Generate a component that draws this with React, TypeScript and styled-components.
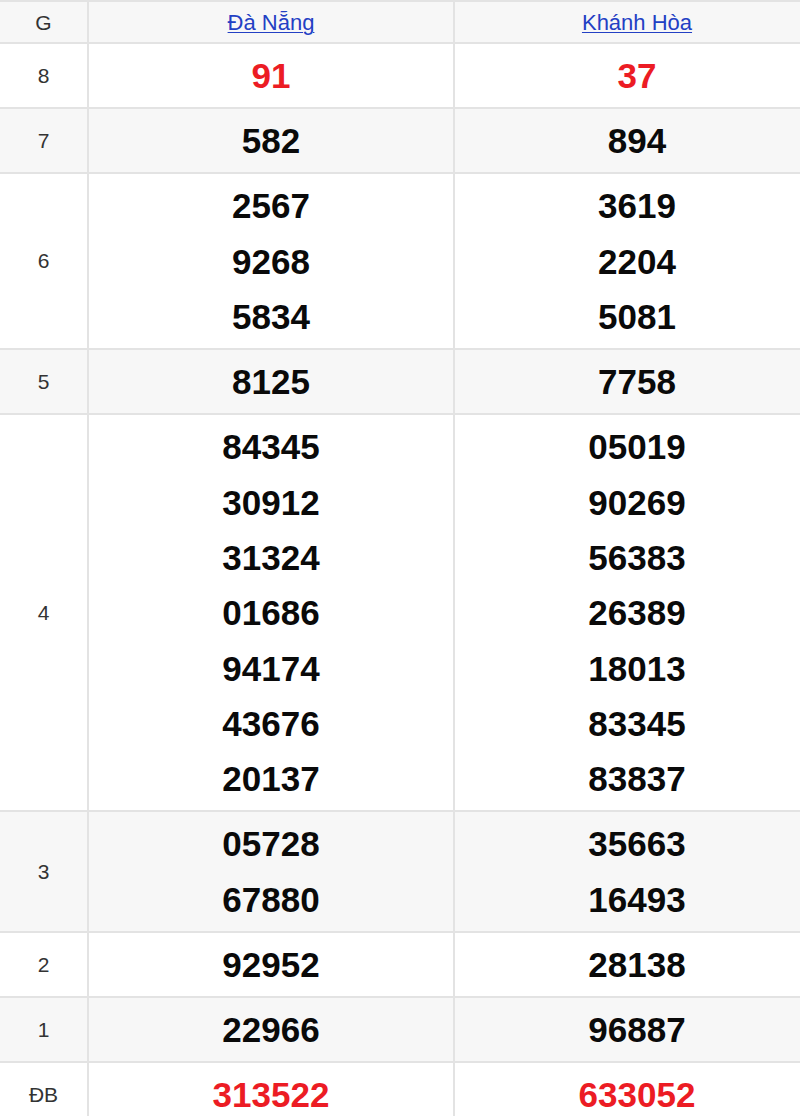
import React from "react";
import styled, { createGlobalStyle } from "styled-components";

const Global = createGlobalStyle`
  html, body { margin: 0; padding: 0; background: #fff; overflow: hidden; }
  body { font-family: "Liberation Sans", Arial, sans-serif; }
`;

const Table = styled.table`
  border-collapse: collapse;
  width: 820px;
  table-layout: fixed;
  font-family: "Liberation Sans", Arial, sans-serif;
`;

const Row = styled.tr<{ $alt?: boolean }>`
  background: ${(p) => (p.$alt ? "#f7f7f7" : "#ffffff")};
`;

const HeadCell = styled.th`
  border: 2px solid #e3e3e3;
  border-left: none;
  padding: 9px 0 7px;
  font-weight: normal;
  font-size: 21px;
  line-height: 24px;
  color: #333;
  text-align: center;
  & + & { border-left: 2px solid #e3e3e3; }
`;

const ProvinceLink = styled.a`
  color: #2340c4;
  text-decoration: underline;
  text-underline-offset: 2px;
  text-decoration-thickness: 1px;
  font-size: 22px;
`;

const LabelCell = styled.td`
  border: 2px solid #e3e3e3;
  border-left: none;
  padding: 0;
  font-size: 21px;
  color: #333;
  text-align: center;
  vertical-align: middle;
`;

const NumCell = styled.td`
  border: 2px solid #e3e3e3;
  padding: 4px 0 3.8px;
  text-align: center;
  vertical-align: middle;
`;

const Num = styled.div<{ $red?: boolean }>`
  font-size: 35px;
  font-weight: bold;
  line-height: 55.35px;
  color: ${(p) => (p.$red ? "#ec1c24" : "#0a0a0a")};
`;

type Prize = { g: string; a: string[]; b: string[]; red?: boolean };

const prizes: Prize[] = [
  { g: "8", a: ["91"], b: ["37"], red: true },
  { g: "7", a: ["582"], b: ["894"] },
  { g: "6", a: ["2567", "9268", "5834"], b: ["3619", "2204", "5081"] },
  { g: "5", a: ["8125"], b: ["7758"] },
  {
    g: "4",
    a: ["84345", "30912", "31324", "01686", "94174", "43676", "20137"],
    b: ["05019", "90269", "56383", "26389", "18013", "83345", "83837"],
  },
  { g: "3", a: ["05728", "67880"], b: ["35663", "16493"] },
  { g: "2", a: ["92952"], b: ["28138"] },
  { g: "1", a: ["22966"], b: ["96887"] },
  { g: "ĐB", a: ["313522"], b: ["633052"], red: true },
];

export default function App() {
  return (
    <>
      <Global />
      <Table>
        <colgroup>
          <col style={{ width: 88 }} />
          <col style={{ width: 366 }} />
          <col style={{ width: 366 }} />
        </colgroup>
        <thead>
          <Row $alt>
            <HeadCell>G</HeadCell>
            <HeadCell>
              <ProvinceLink href="#">Đà Nẵng</ProvinceLink>
            </HeadCell>
            <HeadCell>
              <ProvinceLink href="#">Khánh Hòa</ProvinceLink>
            </HeadCell>
          </Row>
        </thead>
        <tbody>
          {prizes.map((p, i) => (
            <Row key={p.g} $alt={i % 2 === 1}>
              <LabelCell>{p.g}</LabelCell>
              <NumCell>
                {p.a.map((n, j) => (
                  <Num key={j} $red={p.red}>{n}</Num>
                ))}
              </NumCell>
              <NumCell>
                {p.b.map((n, j) => (
                  <Num key={j} $red={p.red}>{n}</Num>
                ))}
              </NumCell>
            </Row>
          ))}
        </tbody>
      </Table>
    </>
  );
}
